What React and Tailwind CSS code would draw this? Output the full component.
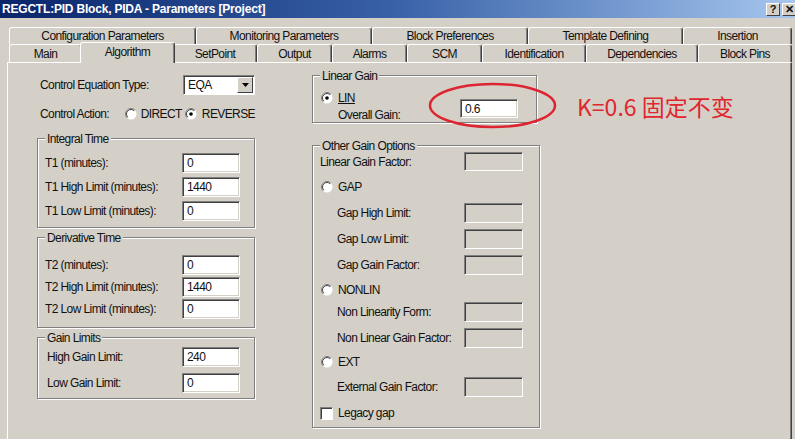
import React from "react";

function Radio({ checked }) {
  return (
    <svg width="12" height="12" viewBox="0 0 12 12" className="shrink-0">
      <circle cx="6" cy="6" r="5.5" fill="#ffffff" />
      <path d="M2.1 9.9A5.5 5.5 0 0 1 9.9 2.1" fill="none" stroke="#808080" strokeWidth="1" />
      <path d="M2.8 9.2A4.5 4.5 0 0 1 9.2 2.8" fill="none" stroke="#404040" strokeWidth="1" />
      {checked && <circle cx="6" cy="6" r="1.8" fill="#000000" />}
    </svg>
  );
}

function Check() {
  return (
    <div className="w-[13px] h-[13px] shrink-0 bg-white border border-t-[#808080] border-l-[#808080] border-b-white border-r-white shadow-[inset_1px_1px_0_#404040]" />
  );
}

function Input({ value, className = "", disabled }) {
  return (
    <div
      className={`flex items-center pl-[4px] shrink-0 border border-t-[#808080] border-l-[#808080] border-b-white border-r-white shadow-[inset_1px_1px_0_#404040,inset_-1px_-1px_0_#d4d0c8] ${
        disabled ? "bg-[#d4d0c8]" : "bg-white"
      } ${className}`}
    >
      {value}
    </div>
  );
}

function Group({ title, className = "", children }) {
  return (
    <div className={`relative border border-[#808080] shadow-[1px_1px_0_#ffffff,inset_1px_1px_0_#ffffff] ${className}`}>
      <span className="absolute -top-[7px] left-[7px] px-[2px] bg-[#d4d0c8] leading-[14px] whitespace-nowrap">{title}</span>
      {children}
    </div>
  );
}

function Field({ label, value }) {
  return (
    <div className="flex items-center justify-between h-5">
      <span className="whitespace-nowrap">{label}</span>
      <Input value={value} className="w-[58px] h-5" />
    </div>
  );
}

function Option({ label, className = "" }) {
  return (
    <div className={`flex items-center justify-between pl-[17px] h-5 ${className}`}>
      <span className="whitespace-nowrap">{label}</span>
      <Input disabled className="w-[59px] h-5" />
    </div>
  );
}

function RadioRow({ label, checked, className = "" }) {
  return (
    <div className={`flex items-center gap-[5px] h-[14px] ml-[1px] ${className}`}>
      <Radio checked={checked} />
      <span className="whitespace-nowrap">{label}</span>
    </div>
  );
}

function Tab({ label, className = "" }) {
  return (
    <div
      className={`flex items-center justify-center whitespace-nowrap border-t border-l border-r border-t-white border-l-white border-r-[#404040] shadow-[inset_-1px_0_0_#808080] rounded-t-[3px] bg-[#d4d0c8] ${className}`}
    >
      {label}
    </div>
  );
}

const topTabs = [
  ["Configuration Parameters", "w-[187px]"],
  ["Monitoring Parameters", "w-[176px]"],
  ["Block Preferences", "w-[156px]"],
  ["Template Defining", "w-[155px]"],
  ["Insertion", "w-[109px]"],
];

export default function App() {
  return (
    <div className="w-[795px] h-[439px] overflow-hidden bg-[#d4d0c8] flex flex-col text-[#111] text-[12px] leading-[14px] tracking-[-0.6px] font-['Liberation_Sans',Arial,sans-serif]">
      {/* title bar */}
      <div className="h-[18px] shrink-0 flex items-center justify-between bg-gradient-to-r from-[#0a246a] via-[#3a62a8] to-[#a6c6ee] pl-[2px]">
        <span className="text-white font-bold text-[12px] tracking-[-0.2px] whitespace-nowrap">REGCTL:PID Block, PIDA - Parameters [Project]</span>
        <div className="flex gap-[2px] -mr-[1px] tracking-normal">
          <div className="w-[14px] h-[13px] flex items-center justify-center bg-[#d4d0c8] border border-t-white border-l-white border-b-[#404040] border-r-[#404040] text-[11px] font-bold">?</div>
          <div className="w-[14px] h-[13px] flex items-center justify-center bg-[#d4d0c8] border border-t-white border-l-white border-b-[#404040] border-r-[#404040] text-[11px] font-bold">✕</div>
        </div>
      </div>

      {/* tab rows */}
      <div className="mt-[9px] flex pl-[9px] h-[17px] shrink-0">
        {topTabs.map(([l, w]) => (
          <Tab key={l} label={l} className={`${w} h-[17px]`} />
        ))}
      </div>
      <div className="relative z-10 flex items-end pl-[9px] h-[18px] shrink-0">
        <Tab label="Main" className="w-[73px] h-[18px]" />
        <Tab label="Algorithm" className="w-[95px] h-[21px] -mx-[2px] -mb-px pb-[3px] z-10" />
        <Tab label="SetPoint" className="w-[84px] h-[18px]" />
        <Tab label="Output" className="w-[75px] h-[18px]" />
        <Tab label="Alarms" className="w-[75px] h-[18px]" />
        <Tab label="SCM" className="w-[75px] h-[18px]" />
        <Tab label="Identification" className="w-[104px] h-[18px]" />
        <Tab label="Dependencies" className="w-[112px] h-[18px]" />
        <Tab label="Block Pins" className="w-[94px] h-[18px]" />
      </div>

      {/* page */}
      <div className="flex-1 ml-[7px] mr-[3px] flex border-t border-l border-r border-t-white border-l-white border-r-[#404040] shadow-[inset_-1px_0_0_#808080]">
        {/* left column */}
        <div className="ml-[29px] w-[218px] shrink-0 flex flex-col">
          <div className="mt-[12px] flex items-center h-5 pl-[3px]">
            <span className="w-[143px] whitespace-nowrap">Control Equation Type:</span>
            <div className="w-[72px] h-5 flex items-center bg-white border border-t-[#808080] border-l-[#808080] border-b-white border-r-white shadow-[inset_1px_1px_0_#404040]">
              <span className="flex-1 pl-[4px]">EQA</span>
              <div className="w-[16px] h-[16px] mr-px flex items-center justify-center bg-[#d4d0c8] border border-t-white border-l-white border-b-[#404040] border-r-[#404040]">
                <svg width="7" height="4" viewBox="0 0 7 4">
                  <path d="M0 0h7L3.5 4z" fill="#000" />
                </svg>
              </div>
            </div>
          </div>

          <div className="mt-[11px] flex items-center h-4 pl-[3px]">
            <span className="w-[93px] whitespace-nowrap">Control Action:</span>
            <div className="w-[66px] flex items-center gap-[4px]">
              <Radio />
              <span>DIRECT</span>
            </div>
            <div className="flex items-center gap-[5px]">
              <Radio checked />
              <span>REVERSE</span>
            </div>
          </div>

          <Group title="Integral Time" className="mt-[16px] h-[90px] pl-[7px] pr-[14px] pt-[14px] flex flex-col gap-1">
            <Field label="T1 (minutes):" value="0" />
            <Field label="T1 High Limit (minutes):" value="1440" />
            <Field label="T1 Low Limit (minutes):" value="0" />
          </Group>

          <Group title="Derivative Time" className="mt-[9px] h-[91px] pl-[7px] pr-[14px] pt-[17px] flex flex-col gap-[2px]">
            <Field label="T2 (minutes):" value="0" />
            <Field label="T2 High Limit (minutes):" value="1440" />
            <Field label="T2 Low Limit (minutes):" value="0" />
          </Group>

          <Group title="Gain Limits" className="mt-[9px] h-[62px] pl-[9px] pr-[14px] pt-[9px] flex flex-col gap-[6px]">
            <Field label="High Gain Limit:" value="240" />
            <Field label="Low Gain Limit:" value="0" />
          </Group>
        </div>

        {/* right column */}
        <div className="ml-[57px] flex flex-col">
          <div className="relative mt-[12px] flex items-start">
            <Group title="Linear Gain" className="w-[225px] h-[48px] pl-[7px] pr-[18px] pt-[10px] flex items-end justify-between">
              <div className="flex flex-col">
                <RadioRow label={<span className="underline">LIN</span>} checked />
                <span className="pl-[18px] mt-[3px] whitespace-nowrap">Overall Gain:</span>
              </div>
              <Input value="0.6" className="w-[58px] h-[19px] mb-[4px]" />
            </Group>
            <svg className="absolute left-[116px] top-[7px]" width="129" height="47" viewBox="0 0 129 47">
              <ellipse cx="64.5" cy="23.5" rx="62.5" ry="21.5" fill="none" stroke="#dc2530" strokeWidth="2.5" />
            </svg>
            <span className="ml-[40px] mt-[16px] text-[23px] leading-[30px] tracking-normal whitespace-nowrap text-[#e0262f] font-['Noto_Sans_CJK_SC',sans-serif]">
              K=0.6 固定不变
            </span>
          </div>

          <Group title="Other Gain Options" className="mt-[22px] w-[228px] h-[283px] pl-[7px] pr-[16px] flex flex-col">
            <div className="mt-[6px] flex items-center justify-between h-[19px]">
              <span className="whitespace-nowrap">Linear Gain Factor:</span>
              <Input disabled className="w-[59px] h-[19px]" />
            </div>
            <RadioRow label="GAP" className="mt-[9px]" />
            <Option label="Gap High Limit:" className="mt-[9px]" />
            <Option label="Gap Low Limit:" className="mt-[6px]" />
            <Option label="Gap Gain Factor:" className="mt-[6px]" />
            <RadioRow label="NONLIN" className="mt-[8px]" />
            <Option label="Non Linearity Form:" className="mt-[5px]" />
            <Option label="Non Linear Gain Factor:" className="mt-[6px]" />
            <RadioRow label="EXT" className="mt-[7px]" />
            <Option label="External Gain Factor:" className="mt-[8px]" />
            <div className="mt-[9px] flex items-center gap-[5px] h-[14px]">
              <Check />
              <span>Legacy gap</span>
            </div>
          </Group>
        </div>
      </div>
    </div>
  );
}
